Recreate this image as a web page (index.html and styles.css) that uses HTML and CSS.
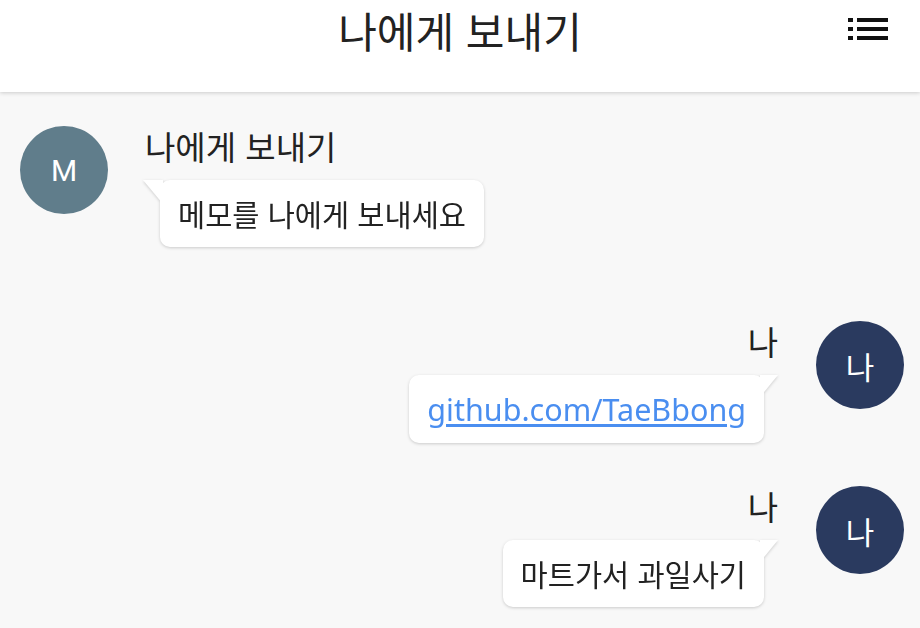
FILE: index.html
```html
<!DOCTYPE html>
<html lang="ko">
<head>
<meta charset="utf-8">
<title>나에게 보내기</title>
<link rel="stylesheet" href="styles.css">
</head>
<body>
<header class="app-bar">
  <h1 class="app-title">나에게 보내기</h1>
  <button class="menu-btn" aria-label="메뉴">
    <svg width="40" height="24" viewBox="0 0 40 24">
      <rect x="0" y="1" width="5" height="4" fill="#111"/>
      <rect x="9" y="1" width="31" height="4" fill="#111"/>
      <rect x="0" y="10" width="5" height="4" fill="#111"/>
      <rect x="9" y="10" width="31" height="4" fill="#111"/>
      <rect x="0" y="19" width="5" height="4" fill="#111"/>
      <rect x="9" y="19" width="31" height="4" fill="#111"/>
    </svg>
  </button>
</header>
<main class="chat">
  <div class="msg msg-in">
    <div class="avatar avatar-bot">M</div>
    <div class="msg-body">
      <div class="msg-name">나에게 보내기</div>
      <div class="bubble bubble-in">메모를 나에게 보내세요</div>
    </div>
  </div>
  <div class="msg msg-out">
    <div class="msg-body">
      <div class="msg-name">나</div>
      <div class="bubble bubble-out"><a class="link" href="#">github.com/TaeBbong</a></div>
    </div>
    <div class="avatar avatar-me">나</div>
  </div>
  <div class="msg msg-out">
    <div class="msg-body">
      <div class="msg-name">나</div>
      <div class="bubble bubble-out">마트가서 과일사기</div>
    </div>
    <div class="avatar avatar-me">나</div>
  </div>
</main>
</body>
</html>
```

FILE: styles.css
```css
* { box-sizing: border-box; }
html, body {
  margin: 0;
  padding: 0;
  height: 100%;
}
body {
  background: #f8f8f8;
  font-family: "Noto Sans CJK KR", "Noto Sans", sans-serif;
  color: #222;
  overflow: hidden;
}
.app-bar {
  height: 92px;
  background: #fff;
  box-shadow: 0 1px 4px rgba(0,0,0,0.18);
  display: flex;
  align-items: flex-start;
  justify-content: center;
  position: relative;
  z-index: 1;
}
.app-title {
  margin: 0;
  font-size: 42px;
  font-weight: 400;
  line-height: 60px;
  color: #222;
}
.menu-btn {
  position: absolute;
  right: 32px;
  top: 17px;
  border: 0;
  background: none;
  padding: 0;
  width: 40px;
  height: 24px;
  display: block;
}
.menu-btn svg { display: block; }
.chat {
  display: flex;
  flex-direction: column;
  padding: 34px 16px 0 20px;
  gap: 43px;
}
.msg {
  display: flex;
  align-items: flex-start;
}
.msg-in { margin-bottom: 31px; }
.msg-out { justify-content: flex-end; }
.avatar {
  width: 88px;
  height: 88px;
  border-radius: 50%;
  flex: none;
  display: flex;
  align-items: center;
  justify-content: center;
  color: #fff;
  font-size: 30px;
}
.avatar-bot {
  background: #607d8b;
  font-family: "Roboto", "Noto Sans", sans-serif;
}
.avatar-me {
  background: #2a3a5f;
  font-size: 31px;
}
.msg-body {
  display: flex;
  flex-direction: column;
}
.msg-in .msg-body {
  margin-left: 37px;
  align-items: flex-start;
}
.msg-out .msg-body {
  margin-right: 38px;
  align-items: flex-end;
}
.msg-name {
  font-size: 33px;
  line-height: 40px;
  color: #222;
}
.bubble {
  position: relative;
  margin-top: 14px;
  background: #fff;
  border-radius: 10px;
  padding: 13px 18px 14px 18px;
  font-size: 29.5px;
  line-height: 40px;
  color: #222;
  filter: drop-shadow(0 1px 1.5px rgba(0,0,0,0.18));
}
.bubble-in { margin-left: 15px; }
.bubble-out { margin-right: 14px; }
.bubble::before {
  content: "";
  position: absolute;
  top: 0;
  width: 20px;
  height: 24px;
  background: #fff;
}
.bubble-in::before {
  left: -17px;
  clip-path: polygon(0 0, 100% 0, 100% 100%);
}
.bubble-out::before {
  right: -14px;
  width: 18px;
  height: 22px;
  clip-path: polygon(0 0, 100% 0, 0 100%);
}
.link {
  color: #4a8ef0;
  text-decoration: underline;
  text-underline-offset: 3px;
  font-family: "Noto Sans", sans-serif;
  font-size: 30.5px;
}
```
